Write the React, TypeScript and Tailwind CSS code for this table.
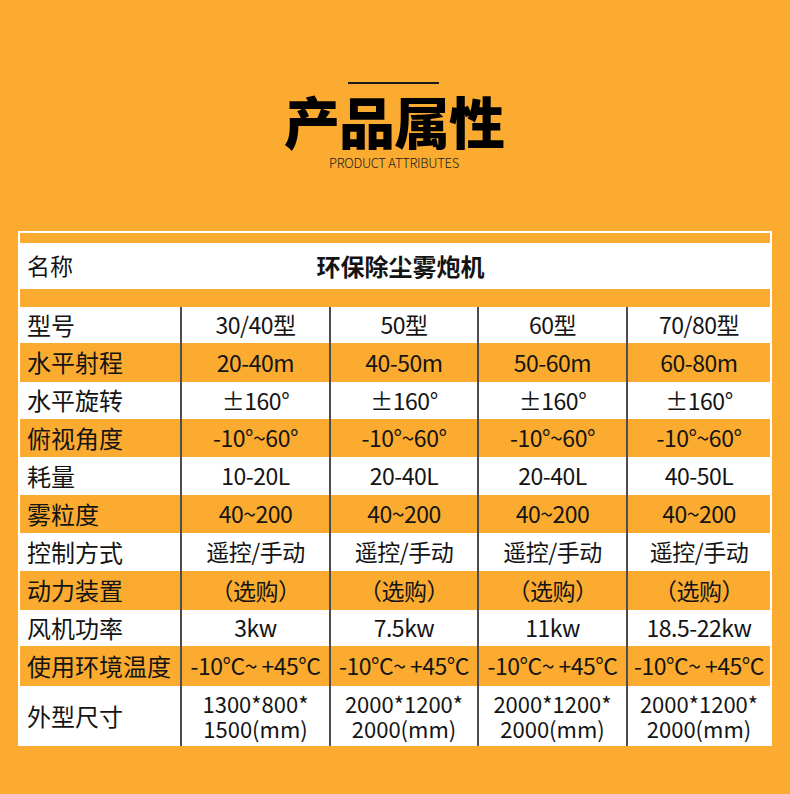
// @ts-nocheck
const rows = [
  { label: "型号", h: "h-[36px]", bg: "bg-white", vals: ["30/40型", "50型", "60型", "70/80型"] },
  { label: "水平射程", h: "h-[39px]", bg: "bg-[#faab30]", vals: ["20-40m", "40-50m", "50-60m", "60-80m"] },
  { label: "水平旋转", h: "h-[37px]", bg: "bg-white", vals: ["±160°", "±160°", "±160°", "±160°"] },
  { label: "俯视角度", h: "h-[38px]", bg: "bg-[#faab30]", vals: ["-10°~60°", "-10°~60°", "-10°~60°", "-10°~60°"] },
  { label: "耗量", h: "h-[38px]", bg: "bg-white", vals: ["10-20L", "20-40L", "20-40L", "40-50L"] },
  { label: "雾粒度", h: "h-[38px]", bg: "bg-[#faab30]", vals: ["40~200", "40~200", "40~200", "40~200"] },
  { label: "控制方式", h: "h-[38px]", bg: "bg-white", vals: ["遥控/手动", "遥控/手动", "遥控/手动", "遥控/手动"] },
  { label: "动力装置", h: "h-[39px]", bg: "bg-[#faab30]", vals: ["（选购）", "（选购）", "（选购）", "（选购）"] },
  { label: "风机功率", h: "h-[36px]", bg: "bg-white", vals: ["3kw", "7.5kw", "11kw", "18.5-22kw"] },
  { label: "使用环境温度", h: "h-[40px]", bg: "bg-[#faab30]", vals: ["-10°C~ +45°C", "-10°C~ +45°C", "-10°C~ +45°C", "-10°C~ +45°C"] },
  {
    label: "外型尺寸",
    h: "h-[60px]",
    bg: "bg-white",
    vals: [
      ["1300*800*", "1500(mm)"],
      ["2000*1200*", "2000(mm)"],
      ["2000*1200*", "2000(mm)"],
      ["2000*1200*", "2000(mm)"],
    ],
  },
];

function Cell({ v }) {
  return (
    <div className="flex flex-col items-center justify-center border-l-2 border-[#4d4d4d] text-center whitespace-nowrap">
      {Array.isArray(v) ? (
        v.map((line, i) => (
          <span key={i} className="block text-[22px] leading-[25px]">
            {line}
          </span>
        ))
      ) : (
        <span className="tracking-[-0.5px]">{v}</span>
      )}
    </div>
  );
}

export default function App() {
  return (
    <div
      className="h-[794px] w-[790px] overflow-hidden bg-[#faab30] text-[#141414]"
      style={{ fontFamily: '"Noto Sans CJK SC", "Noto Sans", sans-serif' }}
    >
      <div className="flex flex-col items-center pt-[82px]">
        <div className="ml-[-3px] h-[1.5px] w-[91px] bg-[#1a1a1a]" />
        <h1 className="mt-[6px] ml-[-2px] text-[56px] font-black leading-[60px] tracking-[-1px] text-black">
          产品属性
        </h1>
        <p className="mt-[5px] ml-[-2px] text-[13px] font-light leading-[16px] tracking-[-0.3px] text-[#1a1a1a]">
          PRODUCT ATTRIBUTES
        </p>
      </div>

      <div className="mt-[60px] ml-[18px] w-[754px] border-2 border-b-0 border-white text-[23px]">
        <div className="h-[10px]" />
        <div className="grid h-[46px] grid-cols-1 bg-white">
          <div className="col-start-1 row-start-1 flex items-center pl-[7px]">名称</div>
          <div className="col-start-1 row-start-1 flex items-center justify-center pl-[11px] text-[24px] font-bold">
            环保除尘雾炮机
          </div>
        </div>
        <div className="h-[18px]" />
        {rows.map((r) => (
          <div
            key={r.label}
            className={`grid grid-cols-[160px_149px_148px_149px_144px] ${r.h} ${r.bg}`}
          >
            <div className="flex items-center pl-[7px] whitespace-nowrap text-[24px]">{r.label}</div>
            {r.vals.map((v, i) => (
              <Cell key={i} v={v} />
            ))}
          </div>
        ))}
      </div>
    </div>
  );
}
